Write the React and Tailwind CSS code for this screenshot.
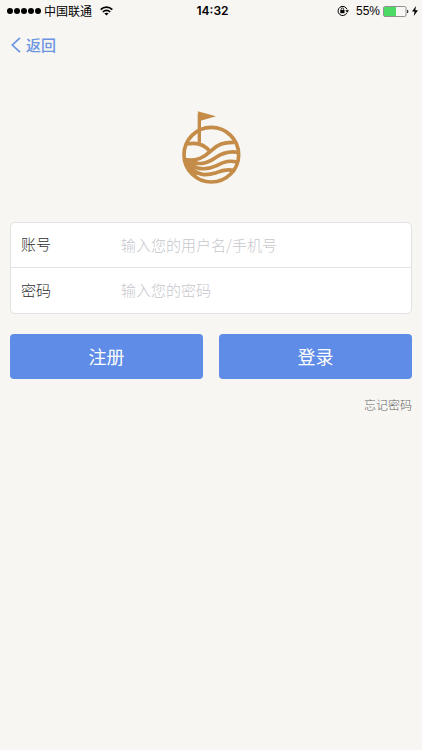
import React from "react";

function StatusBar() {
  return (
    <div className="grid h-[22px] grid-cols-[1fr_auto_1fr] items-center pl-[7px] pr-1 text-black">
      <div className="flex items-center">
        <div className="flex gap-px">
          {[0, 1, 2, 3, 4].map((dot) => (
            <span key={dot} className="size-[6px] rounded-full bg-black" />
          ))}
        </div>
        <span className="ml-[3px] text-[12px] leading-[20px]">中国联通</span>
        <svg className="ml-2 h-[10px] w-[13px]" viewBox="0 0 13 10" fill="none" stroke="black" strokeWidth="1.7" aria-hidden="true">
          <path d="M0.7 3.7C4 .3 9 .3 12.3 3.7" />
          <path d="M2.8 6C5 3.8 8 3.8 10.2 6" />
          <path d="M6.5 9.6L4.4 7.5C5.6 6.4 7.4 6.4 8.6 7.5Z" fill="black" stroke="none" />
        </svg>
      </div>
      <span className="font-['Inter','Liberation_Sans',sans-serif] text-[12px] font-semibold leading-[20px]">14:32</span>
      <div className="flex items-center justify-end">
        <svg className="h-3 w-3" viewBox="0 0 12 12" fill="none" stroke="black" aria-hidden="true">
          <path d="M9.8 8A4.6 4.6 0 1 1 10 4.4" strokeWidth="1" />
          <path d="M8.3 5.3H12L10.2 7.7Z" fill="black" stroke="none" />
          <rect x="3.3" y="5" width="4.2" height="3.2" fill="black" stroke="none" />
          <path d="M4.2 5.2V4.1A1.2 1.2 0 0 1 6.6 4.1V5.2" strokeWidth="0.8" />
        </svg>
        <span className="ml-[7px] font-['Liberation_Sans',sans-serif] text-[12px] leading-[20px]">55%</span>
        <svg className="ml-[3px] h-[11px] w-[26px]" viewBox="0 0 26 11" fill="none" aria-hidden="true">
          <rect x="0.5" y="0.5" width="22.5" height="10" rx="1.5" stroke="#777" strokeWidth="0.8" />
          <path d="M2 1H13V10H2Q1 10 1 9V2Q1 1 2 1Z" fill="#4cd964" />
          <path d="M24 3.7Q25.4 4 25.4 5.5T24 7.3Z" fill="#333" />
        </svg>
        <svg className="ml-[3px] h-[10px] w-[6px]" viewBox="0 0 6 10" fill="black" aria-hidden="true">
          <path d="M4 0L0 5.5H2.6L1.8 10L6 4.2H3.3Z" />
        </svg>
      </div>
    </div>
  );
}

function Logo() {
  return (
    <svg className="h-24 w-[84px]" viewBox="-3 0 252 288" fill="none" stroke="#c48c48" strokeWidth="11" role="img" aria-label="Golf">
      <circle cx="124" cy="164" r="82" />
      <path d="M88 128V40" strokeWidth="10" />
      <path d="M83 34L138 49L92 62Z" fill="#c48c48" stroke="none" />
      <path d="M51 132C80 126 104 133 121 156" />
      <path d="M43 179C82 185 103 171 121 154C143 132 162 126 193 127" />
      <path d="M44 180C86 199 112 190 136 173C159 157 178 152 205 157" />
      <path d="M46 184C83 216 116 208 140 197C164 184 180 180 203 187" />
      <path d="M50 190C82 234 115 225 139 218C162 208 176 206 195 213" />
      <path d="M42 174L84 184L70 191L86 204L74 208L92 222L78 225L96 240L64 222L45 194Z" fill="#c48c48" stroke="none" />
    </svg>
  );
}

function Field({ id, label, placeholder, type, autoComplete }) {
  return (
    <div className="flex h-[45px] items-center pb-[2px] pl-[10px] text-[15px] leading-[22px]">
      <label htmlFor={id} className="w-[100px] shrink-0 font-light text-[#303030]">{label}</label>
      <input
        id={id}
        type={type}
        autoComplete={autoComplete}
        placeholder={placeholder}
        className="h-full min-w-0 flex-1 bg-transparent font-light text-[#303030] outline-none placeholder:text-[#c7c7cd]"
      />
    </div>
  );
}

export default function App() {
  return (
    <div className="min-h-screen bg-[#f7f6f2] font-['Noto_Sans_CJK_SC',sans-serif]">
      <StatusBar />
      <header className="flex h-[46px] items-center px-[11px]">
        <button type="button" className="flex items-center gap-[5px] text-[15px] font-medium leading-[22px] text-[#6c94e2]">
          <svg className="h-4 w-[10px]" viewBox="0 0 10 16" fill="none" stroke="currentColor" strokeWidth="1.7" aria-hidden="true">
            <path d="M9 0.8L1.3 8L9 15.2" />
          </svg>
          返回
        </button>
      </header>
      <main className="px-[10px] pt-8">
        <div className="flex justify-center">
          <Logo />
        </div>
        <form className="mt-[26px]" onSubmit={(event) => event.preventDefault()}>
          <div className="divide-y divide-[#e4e4e4] overflow-hidden rounded-[5px] border border-[#e2e2e2] bg-white">
            <Field id="account" label="账号" placeholder="输入您的用户名/手机号" type="text" autoComplete="username" />
            <Field id="password" label="密码" placeholder="输入您的密码" type="password" autoComplete="current-password" />
          </div>
          <div className="mt-5 grid grid-cols-2 gap-4 text-[18px] leading-[26px] text-white">
            <button type="button" className="h-[45px] rounded-[4px] bg-[#5e8ce6] pb-[2px]">注册</button>
            <button type="submit" className="h-[45px] rounded-[4px] bg-[#5e8ce6] pb-[2px]">登录</button>
          </div>
          <div className="mt-4 flex justify-end">
            <a href="#forgot" className="text-[12px] font-light leading-[20px] text-[#666]">忘记密码</a>
          </div>
        </form>
      </main>
    </div>
  );
}
